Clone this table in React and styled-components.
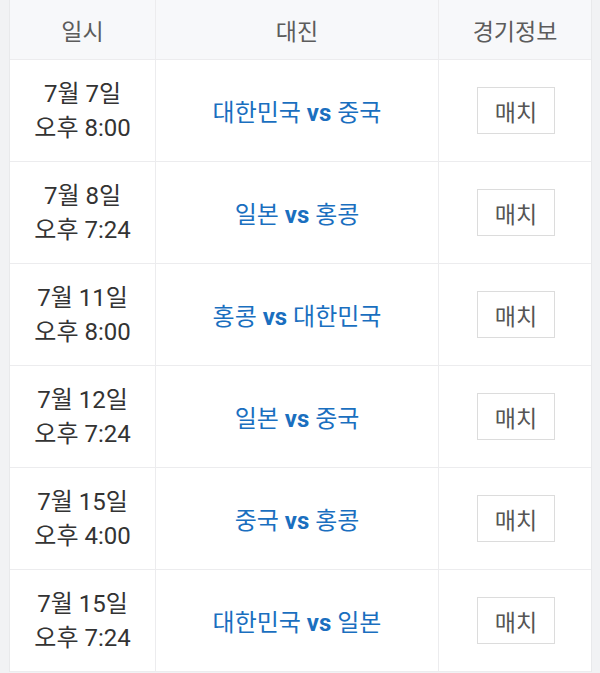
import React from 'react'
import styled, { createGlobalStyle } from 'styled-components'

const GlobalStyle = createGlobalStyle`
  body {
    margin: 0;
    background: #f1f2f4;
    font-family: Roboto, "Noto Sans CJK KR", sans-serif;
  }
`

const matches = [
  { date: '7월 7일', time: '오후 8:00', home: '대한민국', away: '중국' },
  { date: '7월 8일', time: '오후 7:24', home: '일본', away: '홍콩' },
  { date: '7월 11일', time: '오후 8:00', home: '홍콩', away: '대한민국' },
  { date: '7월 12일', time: '오후 7:24', home: '일본', away: '중국' },
  { date: '7월 15일', time: '오후 4:00', home: '중국', away: '홍콩' },
  { date: '7월 15일', time: '오후 7:24', home: '대한민국', away: '일본' },
]

function App() {
  return (
    <Page>
      <GlobalStyle />
      <Table>
        <HeadCell>일시</HeadCell>
        <HeadCell>대진</HeadCell>
        <HeadCell last>경기정보</HeadCell>
        {matches.map((m, i) => (
          <React.Fragment key={i}>
            <Cell>
              <DateText>
                {m.date}
                <br />
                {m.time}
              </DateText>
            </Cell>
            <Cell>
              <Teams>
                {m.home} <Vs>vs</Vs> {m.away}
              </Teams>
            </Cell>
            <Cell last>
              <MatchButton>매치</MatchButton>
            </Cell>
          </React.Fragment>
        ))}
      </Table>
    </Page>
  )
}

export default App

const Page = styled.div`
  padding: 0 8px 0 9px;
  height: 673px;
  overflow: hidden;
`

const Table = styled.div`
  display: grid;
  grid-template-columns: 146px 283px 1fr;
  grid-auto-rows: 102px;
  grid-template-rows: 60px;
  background: #ffffff;
  border-left: 1px solid #e8e9eb;
  border-right: 1px solid #e8e9eb;
`

const HeadCell = styled.div`
  display: flex;
  align-items: center;
  justify-content: center;
  background: #f7f8fa;
  color: #5c5c5c;
  font-size: 23px;
  border-bottom: 1px solid #ececee;
  border-right: ${props => (props.last ? 'none' : '1px solid #ececee')};
`

const Cell = styled.div`
  display: flex;
  align-items: center;
  justify-content: center;
  border-bottom: 1px solid #ececee;
  border-right: ${props => (props.last ? 'none' : '1px solid #ececee')};
`

const DateText = styled.div`
  text-align: center;
  color: #333333;
  font-size: 24px;
  line-height: 34px;
`

const Teams = styled.div`
  color: #1a6fbf;
  font-size: 24px;
  white-space: nowrap;
`

const Vs = styled.b`
  font-weight: 700;
`

const MatchButton = styled.button`
  width: 78px;
  height: 47px;
  background: #ffffff;
  border: 1px solid #dcdcdc;
  color: #555555;
  font-family: inherit;
  font-size: 23px;
  padding: 0;
  margin-left: 2px;
`
